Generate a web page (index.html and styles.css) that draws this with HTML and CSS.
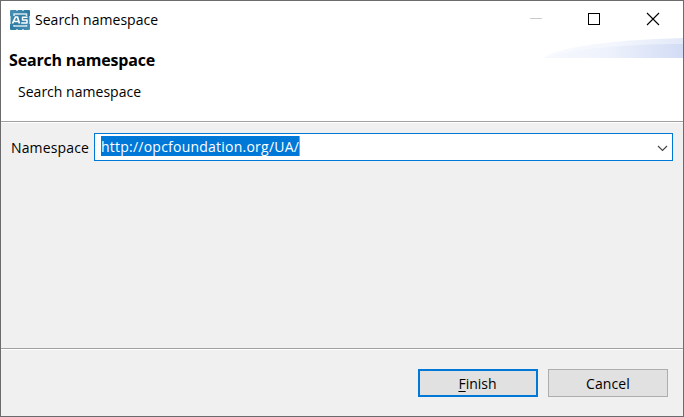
FILE: index.html
```
<!DOCTYPE html>
<html lang="en">
<head>
<meta charset="utf-8">
<title>Search namespace</title>
<link rel="stylesheet" href="styles.css">
</head>
<body>
<main class="dialog">
  <header class="titlebar">
    <svg class="app-icon" width="20" height="20" viewBox="0 0 20 20">
      <defs><linearGradient id="tile" x1="0" y1="0" x2="1" y2="1"><stop offset="0" stop-color="#4b91b4"/><stop offset=".5" stop-color="#2e7ca4"/><stop offset="1" stop-color="#4a92b5"/></linearGradient></defs>
      <rect width="20" height="20" rx="1" fill="url(#tile)"/>
      <path d="M4 6V4H16.500V6M4 15V16H16.500V15" fill="none" stroke="#d6e8f0" stroke-width="1.500"/>
      <path d="M.5 6V14M19.500 6V14M6 .5H8M12 .5H14M6 19.500H8M12 19.500H14" stroke="#a5cbdc"/>
      <path d="M2.500 13.500L5.500 7H7.500L9.500 13.500M4.500 11.500H8.500" fill="none" stroke="#fff" stroke-width="1.700"/>
      <path d="M17.500 7.200H12.500V10H17V13H11.200" fill="none" stroke="#fff" stroke-width="1.500" stroke-linejoin="round"/>
    </svg>
    <span class="caption">Search namespace</span>
    <svg class="controls" width="140" height="37" viewBox="0 0 140 37" shape-rendering="crispEdges">
      <path d="M0 17.500H12" stroke="#ccc"/>
      <rect x="58.500" y="12.500" width="11" height="11" fill="none" stroke="#000"/>
      <path d="M117 12L129 24M129 12L117 24" stroke="#000" stroke-width="1.100" shape-rendering="auto"/>
    </svg>
  </header>
  <section class="heading">
    <h1>Search namespace</h1>
    <p>Search namespace</p>
    <svg class="swoosh" width="140" height="20" viewBox="0 0 140 20">
      <defs>
        <linearGradient id="wash"><stop offset="0" stop-color="#f8fafe"/><stop offset=".5" stop-color="#f3f6fd"/><stop offset="1" stop-color="#e3e9f9"/></linearGradient>
        <linearGradient id="wash-low"><stop offset="0" stop-color="#f7f9fe"/><stop offset=".45" stop-color="#eef2fc"/><stop offset="1" stop-color="#d2dcf5"/></linearGradient>
      </defs>
      <path d="M0 20C14 10 63 2 140 0V20Z" fill="url(#wash)"/>
      <path d="M0 20C30 11 82 6 140 6V20Z" fill="url(#wash-low)"/>
    </svg>
  </section>
  <section class="content">
    <label>Namespace</label>
    <div class="combo">
      <span class="selected"><span class="value">http://opcfoundation.org/UA/</span></span>
      <svg width="11" height="7" viewBox="0 0 11 7"><path d="M1 1L5.500 5.500L10 1" fill="none" stroke="#444" stroke-width="1.150"/></svg>
    </div>
  </section>
  <footer class="actions">
    <button class="primary"><span><u>F</u>inish</span></button>
    <button><span class="cancel">Cancel</span></button>
  </footer>
</main>
</body>
</html>
```
FILE: styles.css
```
* { box-sizing: border-box; }
body { margin: 0; }
.dialog {
  width: 684px; height: 417px;
  display: grid; grid-template-rows: 37px 83px 1fr 68px;
  border: 1px solid #6b6b6d;
  background: #f0f0f0; color: #000;
  font: 14px/20px "Open Sans", sans-serif;
  overflow: hidden;
}
.titlebar { display: flex; align-items: center; padding: 0 13px 0 9px; background: #fff; }
.caption { margin-left: 5px; flex: 1; letter-spacing: .02px; }
.heading { position: relative; background: #fff; padding: 12px 8px; }
.heading h1 { margin: 0; font-size: 16px; line-height: 20px; letter-spacing: -.18px; }
.heading p { margin: 12px 0 0 9px; letter-spacing: .02px; }
.swoosh { position: absolute; right: 0; top: 0; }
.content {
  display: flex; align-items: flex-start;
  padding: 11px 10px 0;
  border-top: 1px solid #a0a0a0; box-shadow: inset 0 1px #fff;
}
.content label { width: 83px; margin-top: 5px; letter-spacing: .15px; }
.combo {
  flex: 1; height: 28px;
  display: flex; align-items: flex-start; justify-content: space-between;
  padding: 2px 4px 0 6px;
  border: 1px solid #0078d7; background: #fff;
}
.combo svg { margin-top: 9px; }
.selected { width: 199px; height: 20px; line-height: 21px; letter-spacing: .23px; background: #0078d7; color: #fff; white-space: nowrap; border-right: 1px solid #ff8728; }
.actions {
  display: flex; justify-content: flex-end; gap: 10px;
  padding: 20px 15px 0;
  border-top: 1px solid #a0a0a0; box-shadow: inset 0 1px #fff;
}
button {
  width: 120px; height: 28px; padding: 2px 0 0;
  border: 1px solid #adadad; background: #e1e1e1; color: #000;
  font: inherit;
}
.primary { border: 2px solid #0078d7; padding-right: 1px; }
.cancel { letter-spacing: .1px; }
u { text-underline-offset: 2px; text-decoration-thickness: 1px; }
```
